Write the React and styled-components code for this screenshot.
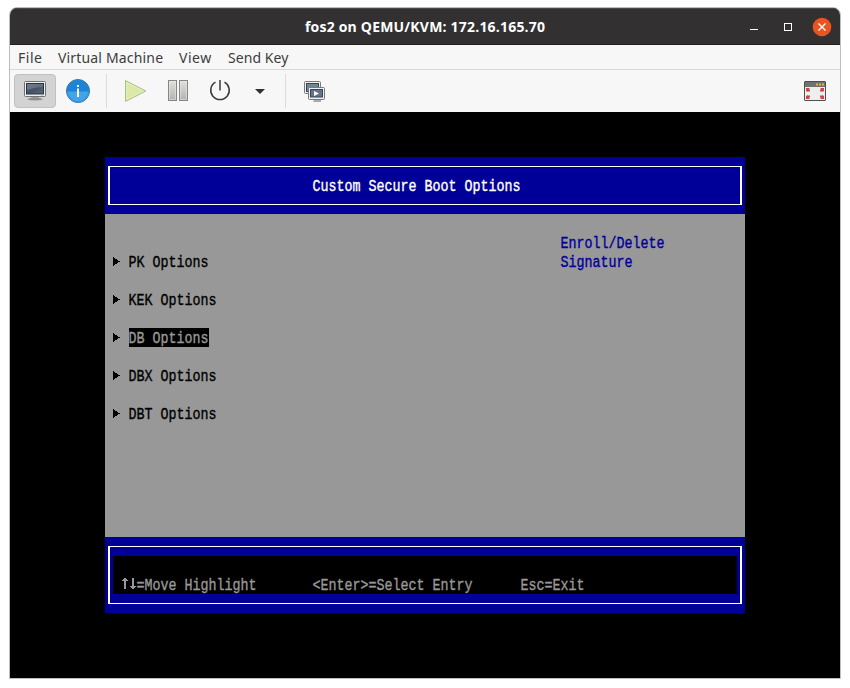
import React from "react";
import styled, { createGlobalStyle } from "styled-components";

const GlobalStyle = createGlobalStyle`
  * { box-sizing: border-box; }
  body { margin: 0; background: #fff; }
  svg { display: block; flex: none; }
`;

const Page = styled.main`
  width: 850px;
  height: 688px;
  padding: 7px 9px 9px;
  overflow: hidden;
  background: #fff;
`;

const Window = styled.section`
  width: 832px;
  height: 672px;
  display: flex;
  flex-direction: column;
  border: 1px solid #bdbdbd;
  border-radius: 8px 8px 0 0;
  overflow: hidden;
  background: #f7f7f7;
`;

const TitleBar = styled.header`
  height: 37px;
  flex: none;
  display: grid;
  grid-template-columns: 1fr auto 1fr;
  align-items: center;
  background: #323031;
  border-top: 1px solid #474546;
  border-bottom: 1px solid #222021;
`;

const Title = styled.h1`
  grid-column: 2;
  width: 240px;
  margin: 0;
  font: 700 14px/20px "Open Sans", "Noto Sans", sans-serif;
  letter-spacing: 0.2px;
  white-space: nowrap;
  color: #fff;
`;

const WindowControls = styled.div`
  display: flex;
  justify-content: flex-end;
  padding-right: 8px;
`;

const MenuBar = styled.nav`
  height: 25px;
  flex: none;
  display: flex;
  gap: 16px;
  padding-left: 8px;
  border-bottom: 1px solid #dadada;
`;

const MenuItem = styled.span`
  width: ${(p) => p.$width}px;
  font: 400 14px/25px "Noto Sans", "Open Sans", sans-serif;
  letter-spacing: ${(p) => p.$tracking}px;
  white-space: nowrap;
  color: #3d3d3d;
`;

const Toolbar = styled.div`
  height: 42px;
  flex: none;
  display: flex;
  align-items: center;
  padding: 0 4px;
`;

const ToolButton = styled.div`
  width: ${(p) => p.$width}px;
  height: 34px;
  display: flex;
  align-items: center;
  justify-content: center;
  border: 1px solid ${(p) => (p.$active ? "#c1c1c1" : "transparent")};
  border-radius: 4px;
  background: ${(p) => (p.$active ? "#d3d3d3" : "transparent")};
`;

const Separator = styled.div`
  width: 1px;
  height: 34px;
  margin: 0 ${(p) => p.$after}px 0 ${(p) => p.$before}px;
  background: #dcdcdc;
`;

const Spacer = styled.div`
  flex: 1;
`;

const Screen = styled.div`
  flex: 1;
  padding: 45px 95px 0;
  background: #000;
`;

const Console = styled.div`
  width: 640px;
  font: 400 13.333px/19px "Liberation Mono", monospace;
  color: #000;
`;

const BluePanel = styled.div`
  height: ${(p) => p.$height}px;
  padding: 9px 3px;
  background: #000098;
`;

const Frame = styled.div`
  height: 100%;
  border: solid #fff;
  border-width: 1px 2px;
  padding: ${(p) => p.$pad || "0"};
`;

const TextRun = styled.span`
  display: inline-block;
  height: 19px;
  white-space: pre;
  transform: translate(-0.4px, 0.8px) scaleY(1.27);
  transform-origin: 50% 52%;
  -webkit-text-stroke: 0.3px currentColor;
`;

const Heading = styled.div`
  padding: 9px 0 0 203px;
  color: #fff;
`;

const Body = styled.div`
  height: 323px;
  display: flex;
  justify-content: space-between;
  padding: 38px 80px 0 8px;
  background: #989898;
`;

const Options = styled.div`
  display: flex;
  flex-direction: column;
  gap: 19px;
`;

const Option = styled.div`
  height: 19px;
  display: flex;
  gap: 8px;
`;

const OptionLabel = styled.div`
  height: 19px;
  overflow: hidden;
  background: ${(p) => (p.$selected ? "#000" : "transparent")};
  color: ${(p) => (p.$selected ? "#989898" : "#000")};
`;

const Help = styled.div`
  width: 104px;
  margin-top: -19px;
  display: flex;
  flex-direction: column;
  align-items: flex-start;
  color: #000098;
`;

const KeyBar = styled.div`
  height: 38px;
  display: grid;
  grid-template-columns: 192px 208px 1fr;
  padding: 19px 0 0 8px;
  background: #000;
  color: #989898;
`;

const MonitorIcon = () => (
  <svg width="24" height="22" viewBox="0 0 24 22">
    <defs>
      <linearGradient id="screen" x2="1" y2="1">
        <stop stopColor="#606b7b" /><stop offset=".5" stopColor="#465264" /><stop offset="1" stopColor="#59687c" />
      </linearGradient>
    </defs>
    <ellipse cx="12" cy="19.3" rx="8" ry="1.5" fill="#aaa" />
    <path d="M9 16h6l1 2H8z" fill="#999" />
    <path d="M6 18.5h12v1H6z" fill="#6f716f" />
    <rect x="1.5" y="1.5" width="21" height="15" rx="1" fill="#eee" stroke="#70726f" />
    <rect x="3.5" y="3.5" width="17" height="10.5" fill="url(#screen)" stroke="#26364a" />
    <path d="M4 4h16v3Q12 7 4 10z" fill="#8993a1" opacity=".45" />
    <path d="M18 15h2" stroke="#aaa" />
  </svg>
);

const InfoIcon = () => (
  <svg width="24" height="24" viewBox="0 0 24 24">
    <circle cx="12" cy="12" r="11.5" fill="#1a84d9" stroke="#47718e" />
    <path d="M1 12.5h22a11 11 0 0 1-22 0z" fill="#43a4e7" />
    <circle cx="12" cy="12" r="10.7" fill="none" stroke="#238bd9" strokeWidth=".7" />
    <rect x="11" y="6" width="2" height="2" fill="#fff" />
    <rect x="11" y="9.5" width="2" height="8.5" fill="#fff" />
  </svg>
);

const PlayIcon = () => (
  <svg width="24" height="24" viewBox="0 0 24 24">
    <path d="M2.5 1.5v21L22.8 12z" fill="#dce8a6" stroke="#a0c08c" />
    <path d="M3.7 3.4v17.2L20.3 12z" fill="none" stroke="#e9f1c3" strokeWidth=".8" />
  </svg>
);

const PauseIcon = () => (
  <svg width="24" height="24" viewBox="0 0 24 24">
    <defs>
      <linearGradient id="bar" x2="0" y2="1"><stop stopColor="#e1e2df" /><stop offset="1" stopColor="#b0b2ac" /></linearGradient>
    </defs>
    {[2.5, 13.5].map((x) => (
      <g key={x}>
        <rect x={x} y="1.5" width="8" height="20" fill="url(#bar)" stroke="#858782" />
        <rect x={x + 1} y="2.5" width="6" height="18" fill="none" stroke="#ecece9" strokeWidth=".5" />
      </g>
    ))}
  </svg>
);

const PowerIcon = () => (
  <svg width="22" height="24" viewBox="0 0 22 24" fill="none" stroke="#3b3b3b" strokeWidth="1.5">
    <path d="M6.5 3.2a9.25 9.25 0 1 0 9 0" />
    <path d="M11 1v10.5" />
  </svg>
);

const DropIcon = () => (
  <svg width="10" height="6" viewBox="0 0 10 6"><path d="M0 1h10L5 6z" fill="#303030" /></svg>
);

const ConsolesIcon = () => (
  <svg width="24" height="24" viewBox="0 0 24 24">
    <rect x="1.5" y="2.5" width="16" height="12" rx="1" fill="#eee" stroke="#777a78" />
    <rect x="3.5" y="4.5" width="12" height="8" fill="#758296" stroke="#354861" />
    <path d="M11 21h7v2h-8z" fill="#aaa" />
    <rect x="5.5" y="8.5" width="16" height="12" rx="1" fill="#f0f0ef" stroke="#777a78" />
    <rect x="7.5" y="10.5" width="12" height="7.5" fill="#657287" stroke="#354861" />
    <path d="M11 12v5l5-2.5z" fill="#fff" />
  </svg>
);

const FullscreenIcon = () => (
  <svg width="24" height="24" viewBox="0 0 24 24">
    <rect x="1.5" y="2.5" width="21" height="19" rx=".5" fill="#eee" stroke="#4e504d" />
    <path d="M2 3h20v5H2z" fill="#70726f" />
    <path d="M13 4.5h2v2h-2zM16 4.5h2v2h-2zM19 4.5h2v2h-2z" fill="#e7b345" />
    <path d="M3 9h4L6 10l1 1v2l-1-1-1 1-2-1zM21 9h-4l1 1-1 1v2l1-1 1 1 2-1zM3 20h4l-1-1 1-1v-2l-1 1-1-1-2 1zM21 20h-4l1-1-1-1v-2l1 1 1-1 2 1z" fill="#c94749" />
  </svg>
);

const ControlIcons = () => (
  <svg width="84" height="20" viewBox="0 0 84 20">
    <path d="M2 12.5h8" stroke="#fff" />
    <rect x="36.5" y="6.5" width="7" height="7" fill="none" stroke="#fff" />
    <circle cx="74" cy="10" r="9.3" fill="#e95420" />
    <path d="M70.5 6.5l7 7m0-7l-7 7" stroke="#fff" strokeWidth="1.4" />
  </svg>
);

const Marker = () => (
  <svg width="8" height="19" viewBox="0 0 8 19" shapeRendering="crispEdges">
    <path d="M0 5h1v1h1v1h2v1h1v1h2v1H5v1H4v1H2v1H1v1H0z" fill="#000" />
  </svg>
);

const Arrows = () => (
  <svg width="16" height="19" viewBox="0 0 16 19" shapeRendering="crispEdges">
    <path d="M3 3h2v1h1v1h1v1H5v8H3V6H1V5h1V4h1zM11 3h2v8h2v1h-1v1h-1v1h-2v-1h-1v-1H9v-1h2z" fill="#989898" />
  </svg>
);

const KeyHint = styled.div`
  display: flex;
`;

const options = ["PK Options", "KEK Options", "DB Options", "DBX Options", "DBT Options"];

export default function App() {
  return (
    <>
      <GlobalStyle />
      <Page>
        <Window>
          <TitleBar>
            <Title>fos2 on QEMU/KVM: 172.16.165.70</Title>
            <WindowControls><ControlIcons /></WindowControls>
          </TitleBar>
          <MenuBar>
            <MenuItem $width={24} $tracking={0.5}>File</MenuItem>
            <MenuItem $width={105} $tracking={0.17}>Virtual Machine</MenuItem>
            <MenuItem $width={33} $tracking={0.5}>View</MenuItem>
            <MenuItem $width={60} $tracking={0.06}>Send Key</MenuItem>
          </MenuBar>
          <Toolbar>
            <ToolButton $width={42} $active><MonitorIcon /></ToolButton>
            <ToolButton $width={44}><InfoIcon /></ToolButton>
            <Separator $before={6} $after={7} />
            <ToolButton $width={42}><PlayIcon /></ToolButton>
            <ToolButton $width={44}><PauseIcon /></ToolButton>
            <ToolButton $width={40}><PowerIcon /></ToolButton>
            <ToolButton $width={40}><DropIcon /></ToolButton>
            <Separator $before={5} $after={8} />
            <ToolButton $width={42}><ConsolesIcon /></ToolButton>
            <Spacer />
            <ToolButton $width={42}><FullscreenIcon /></ToolButton>
          </Toolbar>
          <Screen>
            <Console>
              <BluePanel $height={57}>
                <Frame>
                  <Heading><TextRun>Custom Secure Boot Options</TextRun></Heading>
                </Frame>
              </BluePanel>
              <Body>
                <Options>
                  {options.map((name) => (
                    <Option key={name}>
                      <Marker />
                      <OptionLabel $selected={name === "DB Options"}><TextRun>{name}</TextRun></OptionLabel>
                    </Option>
                  ))}
                </Options>
                <Help>
                  <TextRun>Enroll/Delete</TextRun>
                  <TextRun>Signature</TextRun>
                </Help>
              </Body>
              <BluePanel $height={76}>
                <Frame $pad="9px 3px">
                  <KeyBar>
                    <KeyHint><Arrows /><TextRun>=Move Highlight</TextRun></KeyHint>
                    <KeyHint><TextRun>{"<Enter>=Select Entry"}</TextRun></KeyHint>
                    <KeyHint><TextRun>Esc=Exit</TextRun></KeyHint>
                  </KeyBar>
                </Frame>
              </BluePanel>
            </Console>
          </Screen>
        </Window>
      </Page>
    </>
  );
}
